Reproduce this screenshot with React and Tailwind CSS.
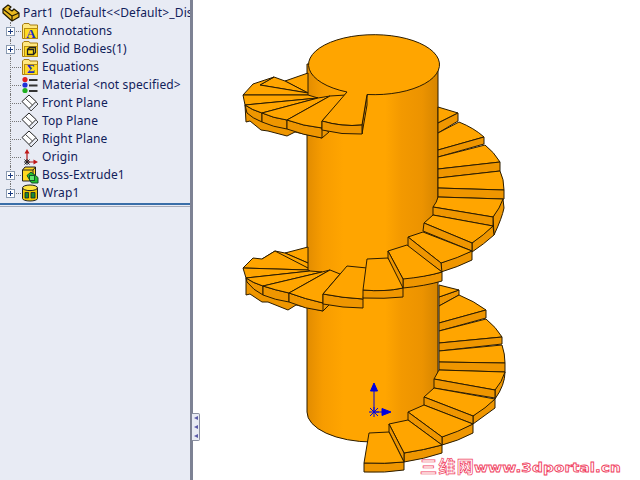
import React from 'react';

const TOP = '#ffa500';
const SIDE = '#ef9600';
const EDGE = '#2b1c00';

// faces of the stairs, back to front, in page coordinates
const faces = [
  // upper left, behind the column
  ['M308 73L285 81L308 93Z', TOP],
  ['M285 81L274 77L260 85L308 93Z', TOP],
  ['M274 77L253 84L243 95L308 95L308 93L260 85Z', TOP],
  ['M245 105L246 122L250 121L261 130L268 131L287 136L295 132L322 138L329 132L322 128L287 120L262 113Z', SIDE],
  ['M245 105Q252 110 262 113L262 122Q252 118 247 113Z', SIDE],
  ['M262 113Q273 118 287 120L287 129Q273 127 262 122Z', SIDE],
  ['M287 120Q303 126 322 128L322 138Q303 135 287 129Z', SIDE],
  ['M243 95L245 105L318 98L308 95Z', TOP],
  ['M245 105Q252 110 262 113L318 98Z', TOP],
  ['M262 113Q273 118 287 120L330 96L318 98Z', TOP],
  ['M287 120Q303 126 322 128L322 121L346 95L330 96Z', TOP],
  // right side, upper turn
  ['M438 107L458 113L438 123Z', TOP],
  ['M438 123L458 113L458 121L438 133Z', SIDE],
  ['M438 133L459 122Q474 128 484 137L438 150Z', TOP],
  ['M438 150L484 137L484 144L438 157Z', SIDE],
  ['M438 157L485 145Q494 152 500 162L438 169Z', TOP],
  ['M438 169L500 162L500 171L438 178Z', SIDE],
  ['M438 178L500 171Q504 179 504 190L438 188Z', TOP],
  ['M438 188L504 190L504 199L438 197Z', SIDE],
  ['M504 208Q502 218 494 235L493 217L503 199Z', SIDE],
  ['M438 197L503 199Q500 208 493 217L433 207Q437 202 438 197Z', TOP],
  ['M433 207L493 217L493 226L433 215Z', SIDE],
  ['M494 235Q484 244 472 252L472 243L493 226Z', SIDE],
  ['M433 215L493 226Q484 235 472 243L424 223Z', TOP],
  ['M424 223L472 243L472 251L423 231Z', SIDE],
  ['M472 251L472 260Q458 267 441 272L441 263Z', SIDE],
  ['M423 232L472 251Q458 258 441 263L408 237Z', TOP],
  ['M408 237L441 263L442 272L408 247Z', SIDE],
  // middle turn, left part
  ['M308 247L285 253L308 263Z', TOP],
  ['M285 253L275 251L262 259L308 268L308 263Z', TOP],
  ['M275 251L262 259L253 258L243 268L308 270L308 268Z', TOP],
  ['M246 278L246 295L250 294L262 302L268 302L288 310L296 305L323 311L330 304L323 294L289 293L263 286Z', SIDE],
  ['M246 278Q253 283 263 286L263 295Q253 290 247 282Z', SIDE],
  ['M263 286Q275 290 289 293L289 302Q275 300 263 295Z', SIDE],
  ['M289 293Q305 299 323 303L323 311Q305 309 289 302Z', SIDE],
  ['M243 268L246 278L310 271L308 270Z', TOP],
  ['M246 278Q253 283 263 286L322 272L310 271Z', TOP],
  ['M263 286Q275 290 289 293L330 270L322 272Z', TOP],
  ['M289 293Q305 299 323 303L323 294L340 274L330 270Z', TOP],
  ['M323 294Q343 298 363 299L363 308Q343 308 323 304Z', SIDE],
  ['M323 294Q343 298 363 299L367 268L347 266Z', TOP],
  ['M363 290Q385 292 403 288L403 297Q385 299 363 298Z', SIDE],
  ['M363 290L367 259L388 258L403 283L403 288Q385 292 363 290Z', TOP],
  ['M403 278Q425 277 442 272L442 281Q425 286 403 288Z', SIDE],
  ['M388 251L407 245L442 272Q425 277 403 279Z', TOP],
  ['M388 251L403 279L403 288L388 258Z', SIDE],
  // right side, lower turn
  ['M439 297L459 290L459 295L439 306Z', SIDE],
  ['M439 285L459 290L439 297Z', TOP],
  ['M439 306L459 295Q474 301 486 310L439 323Z', TOP],
  ['M439 323L486 310L486 318L439 331Z', SIDE],
  ['M439 331L486 319Q496 327 502 337L439 343Z', TOP],
  ['M439 343L502 337L502 344L439 351Z', SIDE],
  ['M439 351L502 345Q505 354 505 363L439 362Z', TOP],
  ['M439 362L505 363L505 372L439 370Z', SIDE],
  ['M505 372Q505 385 495 399L495 390Z', SIDE],
  ['M439 370L505 372Q502 382 495 390L434 379Z', TOP],
  ['M434 379L495 390L495 398L434 388Z', SIDE],
  ['M495 399L495 408L473 424L473 416Z', SIDE],
  ['M434 388L495 399Q486 408 473 416L424 397Z', TOP],
  ['M424 397L473 416L473 424L424 405Z', SIDE],
  ['M473 424L473 433Q458 441 442 445L442 437Z', SIDE],
  ['M424 405L473 424Q458 432 442 437L408 412Z', TOP],
  ['M408 412L442 437L442 445L408 420Z', SIDE],
  ['M404 453Q424 450 442 445L442 453Q424 459 404 462Z', SIDE],
  ['M408 420L442 445Q424 450 404 453L389 424Z', TOP],
  ['M389 424L404 453L404 462L389 432Z', SIDE],
  ['M364 463Q385 464 404 462L404 470Q385 473 364 472Z', SIDE],
  ['M369 433L389 432L404 462Q385 464 364 463Z', TOP],
];

function Model() {
  return (
    <svg width="447" height="480" viewBox="193 0 447 480" className="block">
      <defs>
        <linearGradient id="column" x1="0" x2="1" y1="0" y2="0">
          <stop offset="0" stopColor="#e28c00" />
          <stop offset="0.12" stopColor="#f79c00" />
          <stop offset="0.28" stopColor="#ffa500" />
          <stop offset="0.6" stopColor="#ffa500" />
          <stop offset="0.72" stopColor="#f39900" />
          <stop offset="0.88" stopColor="#ec9300" />
          <stop offset="1" stopColor="#d68500" />
        </linearGradient>
      </defs>
      <path
        d="M307 64L307 412A65.5 30 0 0 0 438 412L438 64Z"
        fill="url(#column)"
        stroke={EDGE}
      />
      {faces.map(([d, fill], i) => (
        <path key={i} d={d} fill={fill} stroke={EDGE} strokeLinejoin="round" />
      ))}
      {/* top of the column with the notch for the first step */}
      <path d="M367 95L367 105L362 134L362 125Z" fill={SIDE} stroke={EDGE} />
      <path
        d="M347 92A65.5 30 0 1 1 367 94.5L362 125Q342 127 322 121Z"
        fill={TOP}
        stroke={EDGE}
        strokeLinejoin="round"
      />
      <path d="M322 121Q342 127 362 125L362 134Q342 135 322 130Z" fill={SIDE} stroke={EDGE} />
      {/* triad */}
      <path d="M374 412V390M374 412H384M370 408L378 416M378 408L370 416M374 407V417M369 412H379" stroke="#0000e0" strokeWidth="1" />
      <path d="M374 383L370.5 391H377.5ZM391 412L382 408.5V415.5Z" fill="#0000e0" stroke="#0000e0" />
      {/* watermark */}
      <text
        x="420"
        y="473"
        fontFamily="'Noto Sans CJK SC', sans-serif"
        fontWeight="700"
        fontSize="17"
        fill="#fff"
        stroke="#f04060"
        strokeWidth="0.7"
        textLength="54"
      >
        三维网
      </text>
      <text
        x="474"
        y="472"
        fontFamily="'DejaVu Sans', sans-serif"
        fontWeight="700"
        fontSize="13"
        fill="#fff"
        stroke="#f04060"
        strokeWidth="0.8"
        textLength="147"
        lengthAdjust="spacingAndGlyphs"
      >
        www.3dportal.cn
      </text>
    </svg>
  );
}

function Folder({ children }) {
  return (
    <svg width="18" height="18" viewBox="0 0 18 18">
      <path d="M1.5 16.5V3L3 1.5H8L9 3H16.5V16.5Z" fill="#ffe880" stroke="#a87c10" />
      <rect x="3.5" y="6.5" width="13" height="10" fill="#ffdc20" stroke="#b88c10" />
      {children}
    </svg>
  );
}

const icons = {
  annotations: (
    <Folder>
      <text x="10" y="15.5" textAnchor="middle" fontFamily="'Liberation Serif', serif" fontWeight="700" fontSize="13" fill="#1c2fc0">A</text>
    </Folder>
  ),
  bodies: (
    <Folder>
      <path d="M6.5 9.5H12.5V14.5H6.5ZM6.5 9.5L8.5 7.5H14.5V12.5L12.5 14.5" fill="none" stroke="#222" strokeWidth="1.3" />
    </Folder>
  ),
  equations: (
    <Folder>
      <text x="10" y="15" textAnchor="middle" fontFamily="'Liberation Serif', serif" fontWeight="700" fontSize="12" fill="#1c2fc0">Σ</text>
    </Folder>
  ),
  material: (
    <svg width="18" height="18" viewBox="0 0 18 18">
      <circle cx="4" cy="3.5" r="2.6" fill="#e02020" />
      <circle cx="4" cy="9" r="2.6" fill="#2030d8" />
      <circle cx="4" cy="14.5" r="2.6" fill="#20b020" />
      <path d="M8 4H16.5M8 9.5H16.5M8 15H16.5" stroke="#333" strokeWidth="1.8" />
    </svg>
  ),
  plane: (
    <svg width="18" height="18" viewBox="0 0 18 18">
      <path d="M8 1L15 7.5L8 14.5L1 7.5Z" fill="#fff" stroke="#222" />
      <path d="M4.5 4.5L11.5 11M10 17L17 10L15 8M10 17L8 14.5" stroke="#333" strokeWidth="0.9" fill="none" />
    </svg>
  ),
  origin: (
    <svg width="18" height="18" viewBox="0 0 18 18">
      <path d="M6 14V4M6 14H14" stroke="#b01818" strokeWidth="1.2" />
      <path d="M6 1L3.5 5.5H8.5ZM17 14L12.5 11.5V16.5Z" fill="#c01818" />
      <path d="M3.5 11.5L8.5 16.5M8.5 11.5L3.5 16.5M6 11V17M3 14H9" stroke="#222" />
    </svg>
  ),
  boss: (
    <svg width="18" height="18" viewBox="0 0 18 18">
      <path d="M1.5 4L4 1H14.5V11L12 15H1.5Z" fill="#ffd820" stroke="#222" />
      <path d="M1.5 4H12V15M12 4L14.5 1" stroke="#222" fill="none" />
      <path d="M6 9.5L10 6L17 11.5V17H10.5Z" fill="#22c030" stroke="#14502a" />
      <rect x="8.5" y="9.5" width="5" height="5" fill="#60e870" stroke="#14502a" />
    </svg>
  ),
  wrap: (
    <svg width="18" height="18" viewBox="0 0 18 18">
      <path d="M1.5 4V14.5A7.5 2.5 0 0 0 16.5 14.5V4Z" fill="#f0c800" stroke="#222" />
      <ellipse cx="9" cy="3.8" rx="7.5" ry="2.8" fill="#ffe640" stroke="#222" />
      <path d="M4 8.5H7.5V14H4ZM10 8.5H14V14H10Z" fill="#1c8a30" stroke="#123" strokeWidth="0.8" />
    </svg>
  ),
};

const rows = [
  { label: 'Annotations', icon: 'annotations', expand: true },
  { label: 'Solid Bodies(1)', icon: 'bodies', expand: true },
  { label: 'Equations', icon: 'equations' },
  { label: 'Material <not specified>', icon: 'material' },
  { label: 'Front Plane', icon: 'plane' },
  { label: 'Top Plane', icon: 'plane' },
  { label: 'Right Plane', icon: 'plane' },
  { label: 'Origin', icon: 'origin' },
  { label: 'Boss-Extrude1', icon: 'boss', expand: true },
  { label: 'Wrap1', icon: 'wrap', expand: true, last: true },
];

function TreeRow({ label, icon, expand, last }) {
  return (
    <div className="flex items-center h-[18px]">
      <div className="relative w-[21px] h-full shrink-0">
        <div className={`absolute left-[10px] top-0 border-l border-dotted border-[#777] ${last ? 'h-[9px]' : 'h-full'}`} />
        <div className="absolute left-[10px] top-[9px] w-[11px] border-t border-dotted border-[#777]" />
        {expand && (
          <div className="absolute left-[6px] top-[5px] w-[9px] h-[9px] border border-[#8a9ab0] bg-white flex items-center justify-center">
            <svg width="7" height="7" viewBox="0 0 7 7">
              <path d="M1 3.5H6M3.5 1V6" stroke="#1a3a80" />
            </svg>
          </div>
        )}
      </div>
      <div className="w-[21px] h-full shrink-0 flex items-center">{icons[icon]}</div>
      <span className="whitespace-nowrap">{label}</span>
    </div>
  );
}

export default function App() {
  return (
    <div className="flex w-[640px] h-[480px] overflow-hidden bg-white relative font-['Noto_Sans',sans-serif] text-[12px] tracking-[0.13px] text-[#10205a]">
      <aside className="w-[190px] h-full shrink-0 bg-[#e8ebf4] flex flex-col overflow-hidden">
        <div className="h-[203px] pt-[4px] shrink-0">
          <div className="flex items-center h-[18px] pl-[2px] gap-[3px] whitespace-nowrap">
            <svg width="18" height="18" viewBox="0 0 18 18" className="shrink-0">
              <path d="M1 5L6 1L9 3L7 5L10 7L12 5L17 9V13L10 17L1 9Z" fill="#e8b820" stroke="#221a00" strokeWidth="1.2" strokeLinejoin="round" />
              <path d="M1 5L10 12V17M10 12L17 9" fill="none" stroke="#221a00" strokeWidth="1.2" />
            </svg>
            <span>Part1&nbsp; (Default&lt;&lt;Default&gt;_Dis</span>
          </div>
          {rows.map((row) => (
            <TreeRow key={row.label} {...row} />
          ))}
        </div>
        <div className="border-t-2 border-[#3a6ea8] border-b border-b-[#a8acb8] h-[4px] shrink-0" />
      </aside>
      <div className="w-[3px] h-full shrink-0 bg-[#7d8294]" />
      <main className="flex-1 h-full">
        <Model />
      </main>
      {/* handle that collapses the panel */}
      <div className="absolute left-[192px] top-[413px] w-[8px] h-[28px] bg-[#e8ebf4] border-r border-t border-b border-[#8a8fa0] rounded-r-[2px] flex flex-col items-center justify-center gap-[5px]">
        {[0, 1, 2].map((i) => (
          <div key={i} className="w-0 h-0 border-y-[2.5px] border-y-transparent border-r-[4px] border-r-[#5a5aa8]" />
        ))}
      </div>
    </div>
  );
}
